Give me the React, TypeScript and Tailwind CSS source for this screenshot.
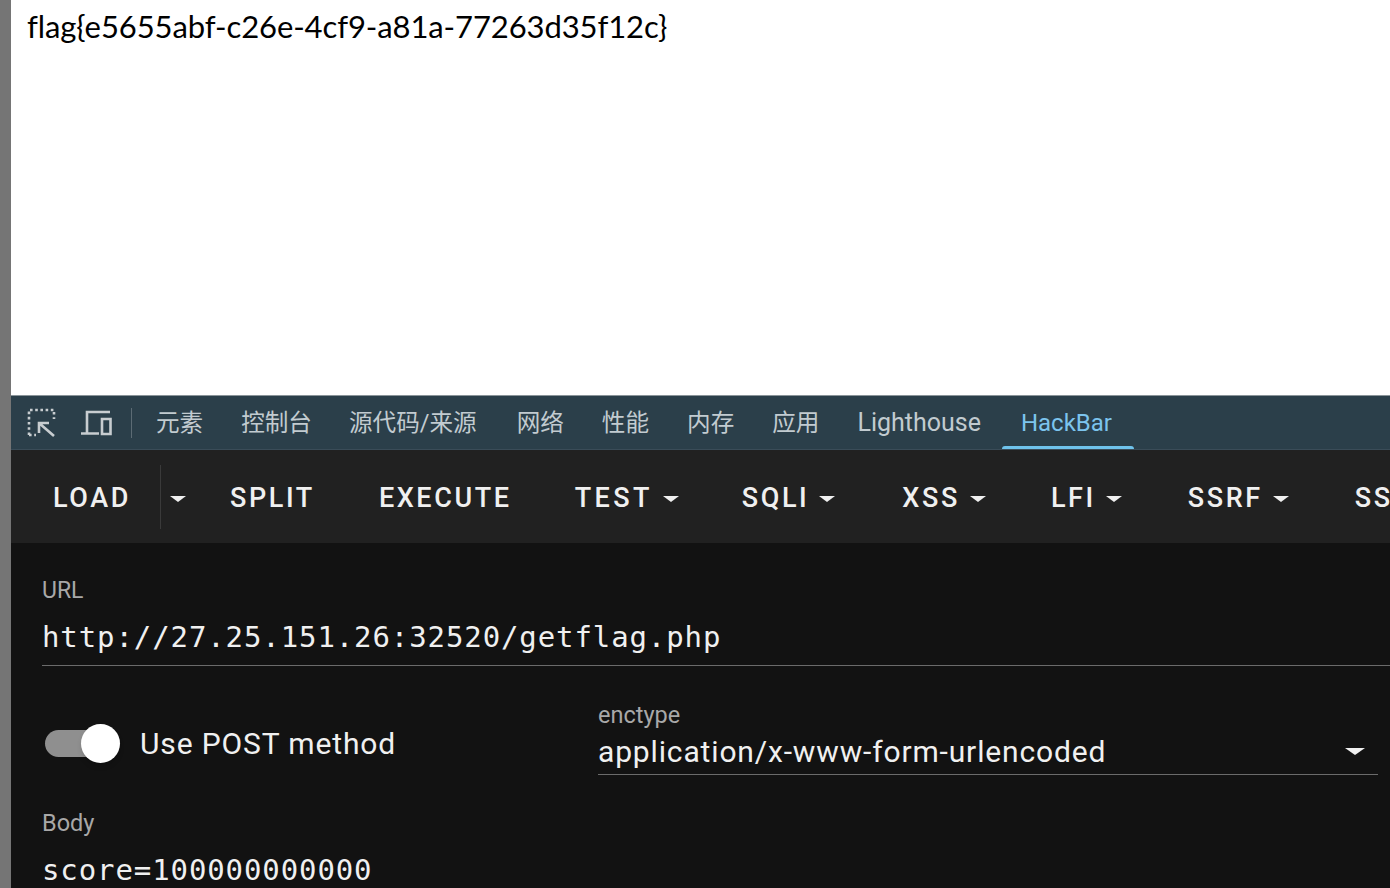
import React from "react";

const Caret = ({ className = "" }: { className?: string }) => (
  <span className={`inline-block shrink-0 w-0 h-0 border-l-[8px] border-r-[8px] border-t-[6px] border-l-transparent border-r-transparent border-t-[#f0f0f0] ${className}`} />
);

const tabs: [string, string][] = [
  ["元素", "text-[23.6px] mt-[3px] mr-[38px]"],
  ["控制台", "text-[23.6px] mt-[3px] mr-[37px]"],
  ["源代码/来源", "text-[23.6px] mt-[3px] mr-[40px]"],
  ["网络", "text-[23.6px] mt-[3px] mr-[38px]"],
  ["性能", "text-[23.6px] mt-[3px] mr-[38px]"],
  ["内存", "text-[23.6px] mt-[3px] mr-[38px]"],
  ["应用", "text-[23.6px] mt-[3px] mr-[38px]"],
  ["Lighthouse", "text-[25px] mr-[40px]"],
];
const menus: [string, string][] = [
  ["TEST", "mr-[63px] tracking-[3.4px]"],
  ["SQLI", "mr-[67px]"],
  ["XSS", "mr-[65px]"],
  ["LFI", "mr-[66px]"],
  ["SSRF", "mr-[66px]"],
];

export default function App() {
  return (
    <div className="w-[1390px] h-[888px] overflow-hidden flex bg-white font-['Roboto','Noto_Sans_CJK_SC',sans-serif]">
      <div className="w-[11px] shrink-0 bg-[#757575]" />
      <div className="flex-1 min-w-0 flex flex-col">
        <div className="h-[395px] shrink-0 bg-white pl-4 pt-[7px] text-[31px] leading-[38px] tracking-[-0.1px] text-black font-['Lato','Noto_Sans',sans-serif]">
          flag{"{"}e5655abf-c26e-4cf9-a81a-77263d35f12c{"}"}
        </div>
        <div className="h-[55px] shrink-0 bg-[#2b3f4a] border-t border-[#8a9499] border-b border-b-[#3a4c58] flex items-center text-[#c2cbd0] whitespace-nowrap">
          <svg width="30" height="30" viewBox="0 0 30 30" fill="none" stroke="#c8cdd0" strokeWidth="2.6" className="ml-[16px]">
            <path d="M2 27V2H27V11M2 27H9" strokeDasharray="2.6 2.6" />
            <path d="M12 25V15H22M12 15L27 28" />
          </svg>
          <svg width="32" height="30" viewBox="0 0 32 30" fill="none" stroke="#c8cdd0" strokeWidth="2.6" className="ml-[23px]">
            <path d="M7 26V4H30M1 25.5H19" />
            <path d="M22 11H30.5V26H22Z" />
          </svg>
          <div className="w-px h-[30px] shrink-0 bg-[#5c6b74] ml-[19px] mr-[24px]" />
          {tabs.map(([t, c]) => (
            <span key={t} className={`leading-none ${c}`}>{t}</span>
          ))}
          <div className="relative h-full flex items-center text-[24px] text-[#7cc4ee]">
            HackBar
            <div className="absolute bottom-0 left-[-19px] right-[-22px] h-[3px] rounded-t bg-[#6fc3ec]" />
          </div>
        </div>
        <div className="h-[93px] shrink-0 bg-[#212121] pt-[4px] flex items-center pl-[42px] text-[27px] tracking-[2.6px] text-[#f0f0f0] whitespace-nowrap font-medium overflow-hidden">
          <span className="shrink-0">LOAD</span>
          <div className="w-px h-[64px] shrink-0 -mt-[4px] bg-[#3a3a3a] ml-[29px] mr-[9px]" />
          <Caret className="mr-[44px]" />
          <span className="shrink-0 mr-[64px]">SPLIT</span>
          <span className="shrink-0 mr-[63px]">EXECUTE</span>
          {menus.map(([m, c]) => (
            <span key={m} className={`shrink-0 flex items-center ${c}`}>
              {m}
              <Caret className="ml-[10px]" />
            </span>
          ))}
          <span className="shrink-0">SS</span>
        </div>
        <div className="flex-1 bg-[#121212] pl-[31px] text-[#f0f0f0]">
          <div className="pt-[34px] text-[23px] leading-[28px] text-[#a8a8a8]">URL</div>
          <div className="h-[61px] border-b border-[#6b6b6b] font-['DejaVu_Sans_Mono',monospace] text-[29px] leading-[64px] tracking-[0.9px] whitespace-nowrap">
            http://27.25.151.26:32520/getflag.php
          </div>
          <div className="flex mt-[35px]">
            <div className="w-[556px] shrink-0 flex items-center self-center mt-[11px]">
              <div className="relative w-[74px] h-[27px] ml-[3px] rounded-full bg-[#8f8f8f]">
                <div className="absolute right-[-1px] top-[-6px] w-[39px] h-[39px] rounded-full bg-white shadow-md" />
              </div>
              <span className="ml-[21px] text-[30px] tracking-[0.87px]">Use POST method</span>
            </div>
            <div className="w-[780px]">
              <div className="text-[23.5px] leading-[28px] text-[#a8a8a8]">enctype</div>
              <div className="h-[46px] border-b border-[#6b6b6b] flex items-center justify-between text-[30px] tracking-[0.85px]">
                <span>application/x-www-form-urlencoded</span>
                <Caret className="mr-[13px] border-l-[10px] border-r-[10px] border-t-[7px] border-t-[#b0b0b0]" />
              </div>
            </div>
          </div>
          <div className="mt-[34px] text-[23.5px] leading-[28px] text-[#a8a8a8]">Body</div>
          <div className="mt-[11px] font-['DejaVu_Sans_Mono',monospace] text-[29px] leading-[44px] tracking-[0.9px] whitespace-nowrap">score=100000000000</div>
        </div>
      </div>
    </div>
  );
}
